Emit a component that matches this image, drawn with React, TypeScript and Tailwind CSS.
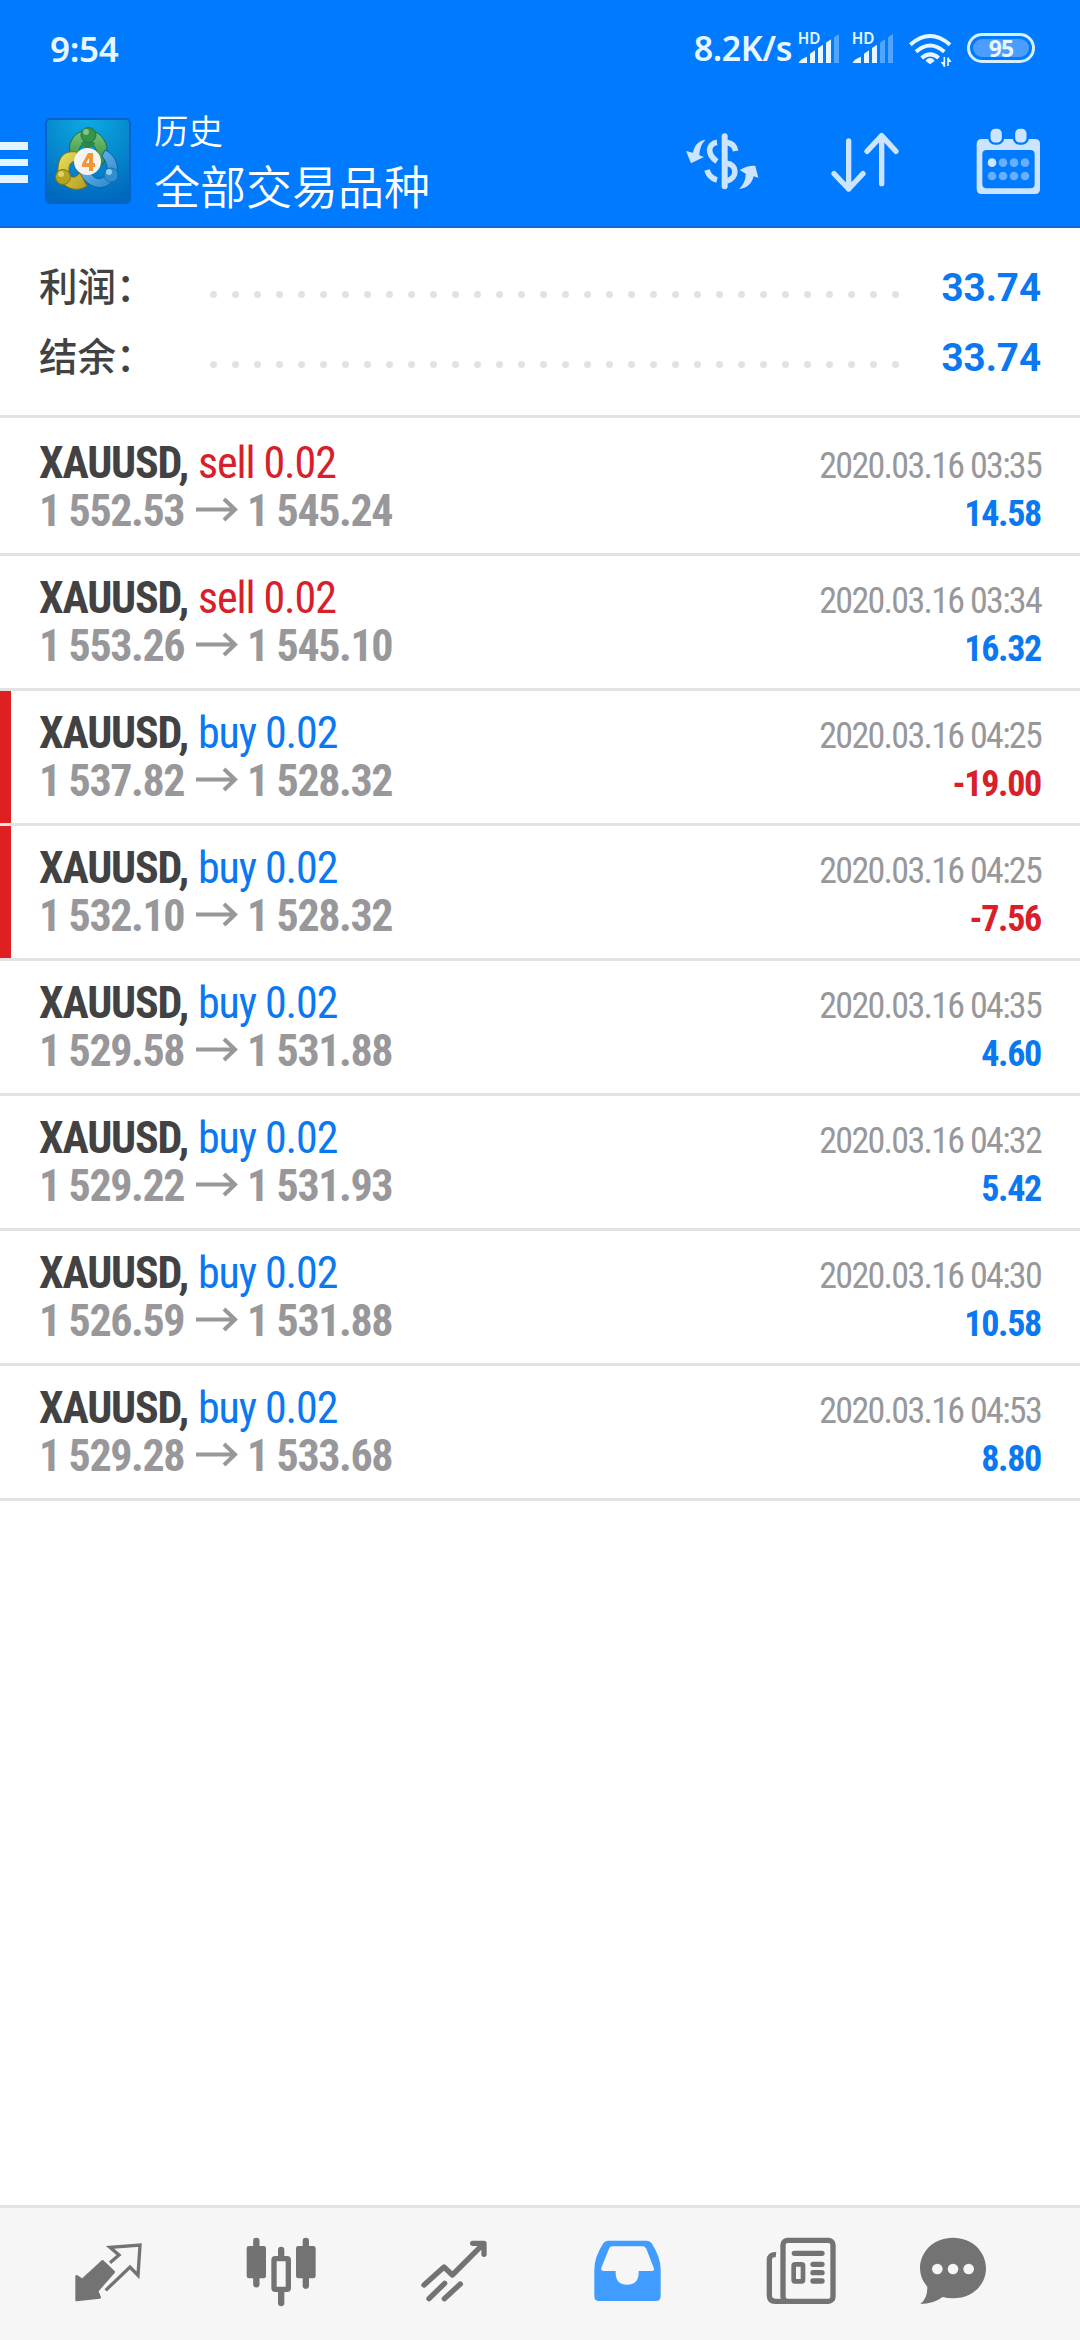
import type { ReactNode } from "react";

type Deal = {
  side: "buy" | "sell";
  open: string;
  close: string;
  time: string;
  profit: string;
  stopped?: boolean;
};

const deals: Deal[] = [
  { side: "sell", open: "1 552.53", close: "1 545.24", time: "2020.03.16 03:35", profit: "14.58" },
  { side: "sell", open: "1 553.26", close: "1 545.10", time: "2020.03.16 03:34", profit: "16.32" },
  { side: "buy", open: "1 537.82", close: "1 528.32", time: "2020.03.16 04:25", profit: "-19.00", stopped: true },
  { side: "buy", open: "1 532.10", close: "1 528.32", time: "2020.03.16 04:25", profit: "-7.56", stopped: true },
  { side: "buy", open: "1 529.58", close: "1 531.88", time: "2020.03.16 04:35", profit: "4.60" },
  { side: "buy", open: "1 529.22", close: "1 531.93", time: "2020.03.16 04:32", profit: "5.42" },
  { side: "buy", open: "1 526.59", close: "1 531.88", time: "2020.03.16 04:30", profit: "10.58" },
  { side: "buy", open: "1 529.28", close: "1 533.68", time: "2020.03.16 04:53", profit: "8.80" },
];

function Signal({ bars }: { bars: number }) {
  const shapes = [
    "M416 186Q418 176 441 167V186Z",
    "M450 186V158L465 148V186Z",
    "M474 186V141L489 131V186Z",
    "M498 186V125L513 115V186Z",
    "M522 186V109L537 99V186Z",
  ];
  return (
    <svg viewBox="411 60 129 162" className="w-[43px] h-[54px]" fill="#e8f6ff">
      <text x="413" y="130" fontSize="46" fontWeight="600" textLength="68" lengthAdjust="spacingAndGlyphs">HD</text>
      {shapes.map((d, i) => (
        <path key={i} d={d} opacity={i < bars ? 1 : 0.35} />
      ))}
    </svg>
  );
}

function StatusBar() {
  return (
    <div className="flex items-center h-[96px] pl-[50px] pr-[45px] text-[#e8f6ff] font-['Noto_Sans',sans-serif] font-semibold">
      <span className="text-[35px] leading-none tracking-[-0.3px]">9:54</span>
      <span className="ml-auto text-[34px] leading-none tracking-[-0.4px]">8.2K/s</span>
      <div className="ml-[5px]"><Signal bars={4} /></div>
      <div className="ml-[11px]"><Signal bars={3} /></div>
      <svg viewBox="744 90 135 114" className="w-[45px] h-[38px] ml-[14px] mt-[4px]" fill="none" stroke="#e8f6ff" strokeWidth="12">
        <path d="M751 131Q810 79 870 131" />
        <path d="M768 152Q810 115 853 152" />
        <path d="M785 171Q810 149 836 171" />
        <path d="M797 180Q800 171 810 171T824 180L810 190Z" fill="#e8f6ff" stroke="none" />
        <path d="M853 168V197M864 170V195" strokeWidth="5" />
        <path d="M842 183L853 183V198ZM875 183H864V168Z" fill="#e8f6ff" stroke="none" />
      </svg>
      <div className="ml-[14px] flex h-[30px] w-[68px] rounded-full border-[3px] border-[#d5f0ff] p-[3px]">
        <div className="flex flex-1 items-center justify-center rounded-full bg-[#4b9dff] text-[23px] font-bold leading-none tracking-[-1px]">95</div>
      </div>
    </div>
  );
}

function Logo() {
  return (
    <svg viewBox="0 0 86 86" className="w-[86px] h-[86px] ml-[17px]">
      <defs>
        <radialGradient id="sky" cx="50%" cy="0%" r="100%">
          <stop offset="0" stopColor="#0cabe3" />
          <stop offset="1" stopColor="#0069bd" />
        </radialGradient>
        <linearGradient id="green" x1="0" y1="0" x2="0" y2="1">
          <stop offset="0" stopColor="#7bc67e" />
          <stop offset="1" stopColor="#2d8a35" />
        </linearGradient>
        <linearGradient id="yellow" x1="0" y1="0" x2="1" y2="1">
          <stop offset="0" stopColor="#e9e25f" />
          <stop offset="1" stopColor="#b79b1c" />
        </linearGradient>
        <linearGradient id="blue" x1="0" y1="0" x2="1" y2="1">
          <stop offset="0" stopColor="#7cc4ee" />
          <stop offset="1" stopColor="#2583cd" />
        </linearGradient>
      </defs>
      <rect x="1" y="1" width="84" height="84" rx="4" fill="url(#sky)" stroke="#0863c9" strokeWidth="2" />
      <path d="M27 40C20 26 29 13 43 12C58 13 68 30 58 46L51 49C55 35 50 25 43 25C35 25 33 31 35 38Z" fill="url(#green)" stroke="#1d6e3d" />
      <path d="M60 32C73 38 77 54 66 65C55 75 40 67 34 54L45 54C51 64 59 62 62 54C63 47 60 42 57 38Z" fill="url(#blue)" stroke="#155ea3" />
      <path d="M32 34C17 32 12 41 13 58C19 71 32 75 42 68L35 55C28 63 23 58 24 51C24 45 28 43 32 43Z" fill="url(#yellow)" stroke="#766d20" />
      <path d="M36 26C37 21 49 21 50 26L46 30H40Z" fill="#2d8a46" />
      <circle cx="43.500" cy="17" r="7.500" fill="#34944b" stroke="#217843" />
      <circle cx="41" cy="14" r="3" fill="#80c486" />
      <circle cx="18" cy="59" r="7.500" fill="#b4a423" stroke="#82761d" />
      <circle cx="16" cy="56" r="3" fill="#ded35c" />
      <circle cx="66" cy="57" r="7" fill="#318fce" stroke="#1b6cab" />
      <circle cx="64" cy="54" r="3" fill="#8cd0ef" />
      <circle cx="42.500" cy="43.500" r="13.500" fill="#f7f3f1" />
      <path d="M43 35L37 46V49H44V53H48V49H50V45H48V35ZM44 40V45H41Z" fill="#f39436" fillRule="evenodd" />
    </svg>
  );
}

function AppBar() {
  return (
    <div className="flex items-center h-[132px] border-b-2 border-[#1468d6]">
      <div className="flex flex-col gap-[9px] mt-[3px]">
        <div className="h-[8px] w-[28px] bg-[#e3f5ff]" />
        <div className="h-[7px] w-[28px] bg-[#e3f5ff]" />
        <div className="h-[8px] w-[28px] bg-[#e3f5ff]" />
      </div>
      <Logo />
      <div className="ml-[23px] mb-[5px] flex flex-col font-['Noto_Sans_CJK_SC',sans-serif] font-[350] text-white">
        <span className="text-[34.500px] leading-[50px]">历史</span>
        <span className="text-[46px] leading-[60px]">全部交易品种</span>
      </div>
      <svg viewBox="75 378 222 204" className="w-[74px] h-[68px] ml-auto" fill="none" stroke="#cce4ff">
        <path d="M194 406V556" strokeWidth="18" strokeLinecap="round" />
        <path d="M171 424C144 428 139 460 171 481" strokeWidth="17" />
        <path d="M141 507C145 522 156 533 171 537" strokeWidth="17" />
        <path d="M200 424C215 426 224 434 227 450M200 487C231 490 235 530 200 540" strokeWidth="17" />
        <path d="M137 416C113 419 102 436 99 455L78 450L93 487L132 468L118 463C119 446 124 427 137 416Z" fill="#cce4ff" stroke="none" />
        <path d="M237 564C262 562 276 547 281 526L295 530L286 495C273 493 255 498 239 507L257 518C257 537 250 551 237 564Z" fill="#cce4ff" stroke="none" />
      </svg>
      <svg viewBox="510 378 210 204" className="w-[70px] h-[68px] ml-[71px]" fill="none" stroke="#cce4ff" strokeWidth="16" strokeLinecap="round" strokeLinejoin="round">
        <path d="M566 420V564M522 518L566 564L609 518" />
        <path d="M665 548V404M621 451L665 404L708 451" />
      </svg>
      <svg viewBox="948 378 195 204" className="w-[65px] h-[68px] ml-[76px] mr-[39px]">
        <path d="M965 414H1125Q1140 414 1140 429V564Q1140 579 1125 579H965Q950 579 950 564V429Q950 414 965 414ZM980 447Q967 447 967 460V549Q967 562 980 562H1111Q1124 562 1124 549V460Q1124 447 1111 447Z" fill="#cce4ff" fillRule="evenodd" />
        <rect x="988" y="380" width="41" height="48" rx="17" fill="#cce4ff" stroke="#007aff" strokeWidth="7" />
        <rect x="1062" y="380" width="41" height="48" rx="17" fill="#cce4ff" stroke="#007aff" strokeWidth="7" />
        {[996, 1029, 1062, 1095].map((x) => (
          <g key={x} fill="#66b0ff">
            <circle cx={x} cy="485" r="13" fill={x === 996 ? "#cce8ff" : "#66b0ff"} />
            <circle cx={x} cy="525" r="13" />
          </g>
        ))}
      </svg>
    </div>
  );
}

function SummaryLine({ label, value }: { label: string; value: string }) {
  return (
    <div className="flex items-center h-[70px] pl-[39px] pr-[39px]">
      <span className="w-[171px] mb-[9px] font-['Noto_Sans_CJK_SC',sans-serif] font-medium text-[38.500px] leading-[60px] text-[#424242]">{label}</span>
      <div className="flex gap-[15px] mt-[12px]">
        {Array.from({ length: 32 }, (_, i) => (
          <i key={i} className="size-[7px] rounded-full bg-[#e2e2e3]" />
        ))}
      </div>
      <span className="ml-auto font-[Roboto,sans-serif] font-bold text-[38.500px] leading-[70px] text-[#0a78f0]">{value}</span>
    </div>
  );
}

function DealRow({ deal, first }: { deal: Deal; first: boolean }) {
  return (
    <div
      className={`flex border-b-[3px] border-[#e2e2e2] font-['Roboto_Condensed',Roboto,sans-serif] [font-stretch:75%] whitespace-nowrap ${first ? "h-[138px] pt-[3px]" : "h-[135px]"}`}
    >
      <div className={`w-[11px] ${deal.stopped ? "bg-[#e02020]" : ""} ${first ? "-mt-[3px]" : ""}`} />
      <div className="pl-[28px] pt-[18px] text-[44px] leading-[48px]">
        <div className="flex">
          <span className="w-[159px] font-bold tracking-[-1.2px] text-[#424242]">XAUUSD,</span>
          <span className={`tracking-[-1.1px] ${deal.side === "sell" ? "text-[#d8202a]" : "text-[#0a78f0]"}`}>{deal.side} 0.02</span>
        </div>
        <div className="flex font-bold tracking-[-1.4px] text-[#98989b]">
          <span className="w-[157px]">{deal.open}</span>
          <svg viewBox="0 0 42 48" className="w-[42px] h-[48px] mr-[9px]" fill="none" stroke="#98989b" strokeWidth="4">
            <path d="M0 22.500H39M28 12L39 22.500L28 33" />
          </svg>
          <span>{deal.close}</span>
        </div>
      </div>
      <div className="ml-auto mr-[39px] pt-[21px] text-right text-[36px] leading-[48px]">
        <div className="tracking-[-1.7px] text-[#98989b]">{deal.time}</div>
        <div className={`font-bold tracking-[-1.3px] ${deal.profit.startsWith("-") ? "text-[#d8202a]" : "text-[#0a78f0]"}`}>{deal.profit}</div>
      </div>
    </div>
  );
}

function TabIcon({ box, className = "", children }: { box: string; className?: string; children: ReactNode }) {
  return (
    <svg viewBox={box} className={`w-[74px] h-[76px] shrink-0 ${className}`} fill="#737373" stroke="#737373" strokeWidth="0">
      {children}
    </svg>
  );
}

function TabBar() {
  return (
    <div className="flex h-[135px] border-t-[3px] border-[#e2e2e2] bg-[#f6f6f6] pl-[72px] pt-[28px] gap-[99px]">
      <TabIcon box="126 138 222 228">
        <path d="M218 214L251 246L201 303L209 322L140 330V259L157 270Z" strokeWidth="8" strokeLinejoin="round" />
        <path d="M240 218L267 195L240 172L330 165L324 256L300 231L227 301" fill="none" strokeWidth="10" />
      </TabIcon>
      <TabIcon box="645 138 222 228">
        <rect x="650" y="168" width="58" height="97" rx="7" />
        <rect x="798" y="168" width="59" height="97" rx="7" />
        <path d="M679 153V283M827.500 153V287M753.500 180V200M753.500 305V339" strokeWidth="19" strokeLinecap="round" />
        <rect x="732" y="206" width="43" height="92" rx="4" fill="none" strokeWidth="16" />
      </TabIcon>
      <TabIcon box="114 138 222 228">
        <g fill="none" strokeWidth="16" strokeLinecap="round" strokeLinejoin="round">
          <path d="M132 285L192 231L217 255L308 164M278 160H312V193" />
          <path d="M147 326L194 280M193 326L241 282" />
        </g>
      </TabIcon>
      <TabIcon box="633 138 222 228">
        <path
          d="M684 152H801Q810 152 815 160Q842 202 842 238V319Q842 333 828 333H656Q643 333 643 319V238Q643 202 670 160Q675 152 684 152ZM697 169Q690 169 687 176L664 233Q661 243 671 243H707V251Q709 284 741 284Q774 284 776 251V243H813Q825 243 821 233L799 176Q795 169 788 169Z"
          fill="#409cff"
          fillRule="evenodd"
        />
      </TabIcon>
      <TabIcon box="102 138 222 228">
        <rect x="159" y="151" width="150" height="183" rx="14" fill="none" strokeWidth="16" />
        <path d="M138 194Q118 192 118 211V316Q118 334 136 334H170" fill="none" strokeWidth="16" />
        <path d="M193 190H276M249 223H276M249 248H276M249 273H276" strokeWidth="16" strokeLinecap="round" />
        <rect x="191" y="223" width="28" height="51" rx="4" fill="none" strokeWidth="14" />
      </TabIcon>
      <TabIcon box="558 138 222 228" className="-ml-[21px]">
        <path d="M669 143C727 143 768 185 768 235C768 285 727 325 669 325Q652 325 638 321Q610 342 571 342Q593 324 592 290Q570 266 570 235C570 185 611 143 669 143Z" />
        <g fill="#f6f6f6">
          <circle cx="622" cy="237" r="16" />
          <circle cx="669" cy="237" r="16" />
          <circle cx="716" cy="237" r="16" />
        </g>
      </TabIcon>
    </div>
  );
}

export default function App() {
  return (
    <div className="flex flex-col w-[1080px] h-[2340px] bg-white">
      <header className="h-[228px] bg-[#007aff]">
        <StatusBar />
        <AppBar />
      </header>
      <section className="h-[190px] pt-[25px] border-b-[3px] border-[#e2e2e2]">
        <SummaryLine label="利润：" value="33.74" />
        <SummaryLine label="结余：" value="33.74" />
      </section>
      <main className="flex-1">
        {deals.map((deal, i) => (
          <DealRow key={i} deal={deal} first={i === 0} />
        ))}
      </main>
      <TabBar />
    </div>
  );
}
